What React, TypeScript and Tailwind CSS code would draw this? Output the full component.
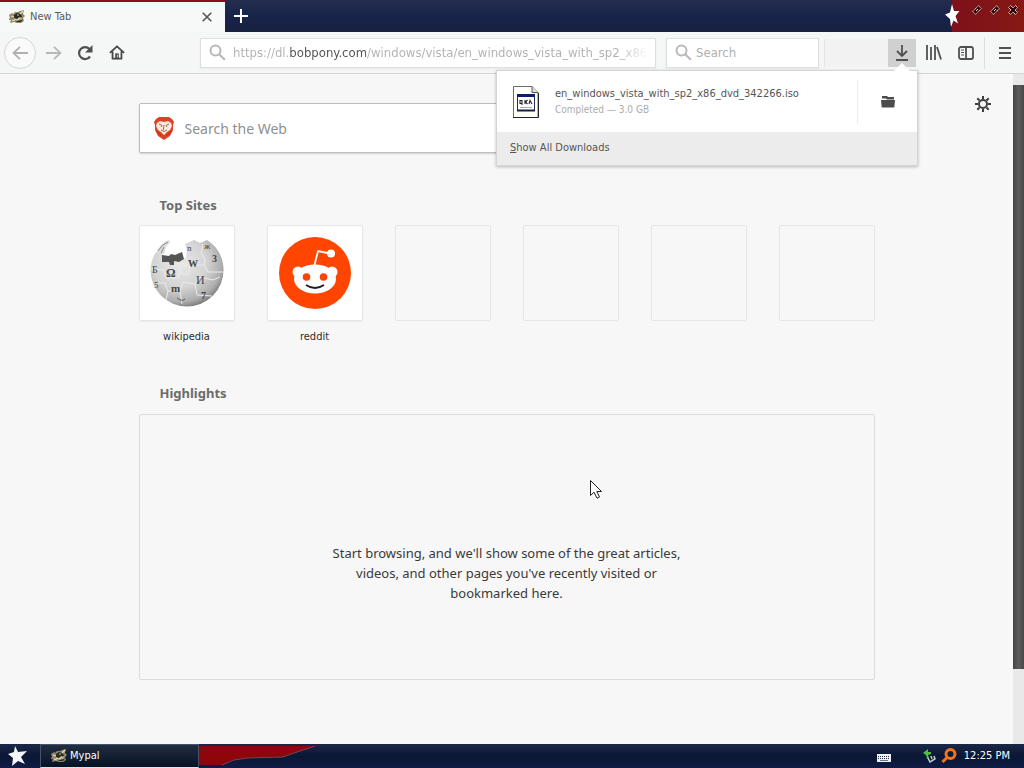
import type { ReactNode } from 'react';

const uiFont = "font-['DejaVu_Sans_Condensed','Noto_Sans',sans-serif]";
const pageFont = "font-['Noto_Sans',sans-serif]";

function MypalIcon() {
  return (
    <svg width="16" height="16" viewBox="0 0 16 16" aria-hidden="true">
      <path d="M0 6l3-2 1 1 2-2 3 0 2-1 4-1-1 4 2 2-2 2 1 3-3 2-4 0-3-1-4 1 1-3-3 0 2-2z" fill="#91886a" />
      <path d="M5 6l3-2 4 1 1 3-3 0-2 2-3-1zM6 11l4 1 4-2-2 3-4 0z" fill="#292a27" />
      <path d="M2 7l3 1M5 10l3 1 3-2M11 5l3-3M3 11l3 1" stroke="#e8dfae" strokeWidth="1.2" fill="none" />
      <path d="M8 6h2M12 9v2" stroke="#b9cfc0" strokeWidth="1" />
    </svg>
  );
}

function ToolButton({ label, className, children }: { label: string; className: string; children: ReactNode }) {
  return (
    <button type="button" aria-label={label} className={`flex shrink-0 items-center justify-center ${className}`}>
      {children}
    </button>
  );
}

function DiamondGlyph() {
  return (
    <svg width="10" height="10" viewBox="0 0 10 10" fill="#2c0808" aria-hidden="true">
      <path d="M.7 6.500L6.500.7l2.800 2.800L3.500 9.300z" stroke="#f6e4e0" strokeDasharray="1.300 .5" />
      <path d="M4 6l2-2" stroke="#f6e4e0" />
    </svg>
  );
}

function TitleBar() {
  return (
    <header className="flex h-8 bg-linear-to-b from-[#242d4d] via-[#17234a] to-[#18213f]">
      <div className="flex w-[225px] shrink-0 items-center border-t-2 border-[#8e0d1c] bg-[#f7f8f8] pr-2 pl-[9px]">
        <MypalIcon />
        <span className="ml-[5px] grow text-[11px] text-[#5a5a5a]">New Tab</span>
        <ToolButton label="Close tab" className="size-5">
          <svg width="10" height="10" viewBox="0 0 10 10" stroke="#555" strokeWidth="1.6">
            <path d="M.7.7l8.6 8.6M9.3.7L.7 9.3" />
          </svg>
        </ToolButton>
      </div>
      <ToolButton label="Open a new tab" className="w-8">
        <svg width="14" height="14" viewBox="0 0 14 14" stroke="#fff" strokeWidth="2">
          <path d="M7 0v14M0 7h14" />
        </svg>
      </ToolButton>
      <div className="grow" />
      <div className="flex w-20 shrink-0 bg-linear-to-r from-transparent from-10% via-[#7d101b] via-10% to-[#861913]">
        <svg width="16" height="30" viewBox="0 0 16 30" aria-hidden="true" className="shrink-0">
          <path d="M8 4l2 7 5.500 0-4 5 2.500 7.500-4.500-3L7 27l-1-8-5-4.500 5-2z" fill="#fff" />
        </svg>
        <div className="flex h-5 grow items-center justify-end gap-2 pr-[6px]">
          <ToolButton label="Minimize" className="size-[10px]"><DiamondGlyph /></ToolButton>
          <ToolButton label="Restore" className="size-[10px]"><DiamondGlyph /></ToolButton>
          <ToolButton label="Close window" className="size-[10px]">
            <svg width="10" height="10" viewBox="0 0 10 10" fill="#2c0808" stroke="#f8e8e5" strokeDasharray="1.300 .5" aria-hidden="true">
              <path d="M.5 2.500l2-2L5 3 7.500.5l2 2L7 5l2.500 2.500-2 2L5 7 2.500 9.500l-2-2L3 5z" />
            </svg>
          </ToolButton>
        </div>
      </div>
    </header>
  );
}

function FileIcon() {
  return (
    <svg width="28" height="32" viewBox="0 0 28 32" aria-hidden="true" className="shrink-0">
      <path d="M1.500 .5h18.500l6 6v25H1.500z" fill="#fffff8" stroke="#6d6e62" />
      <path d="M20 .5v6h6" fill="#ddd" stroke="#55564c" />
      <path d="M1 31.500h25.500V7" fill="none" stroke="#222" />
      <path d="M5.500 9.500h17v15h-17z" fill="#fff" stroke="#273052" />
      <path d="M5 8h18v3H5z" fill="#0d1b70" />
      <path d="M5 24.500h18" stroke="#171f3d" strokeWidth="2" />
      <path d="M8 14.500h2v3H8zM10 17v2M13 14v4M15.500 14l-2 2 2 2M17 18l1-3.500 2 3.500" fill="none" stroke="#20242f" strokeWidth="1.100" />
      <path d="M8 21.500h12" stroke="#a7aab3" />
    </svg>
  );
}

function DownloadsPanel() {
  return (
    <section aria-label="Downloads" className="absolute top-[38px] right-[106px] z-10 w-[422px] border border-[#d5d5d5] bg-white shadow-[0_1px_3px_rgba(0,0,0,0.25)]">
      <svg width="18" height="9" viewBox="0 0 18 9" className="absolute -top-[8px] right-[6px]" aria-hidden="true">
        <path d="M0 9l9-9 9 9z" fill="#fff" />
      </svg>
      <div className="flex h-[61px] items-center pl-[15px]">
        <FileIcon />
        <div className="ml-[15px] grow">
          <p className="text-[11px] leading-4 text-[#555555]">en_windows_vista_with_sp2_x86_dvd_342266.iso</p>
          <p className="text-[10px] leading-4 text-[#adadad]">Completed — 3.0 GB</p>
        </div>
        <div className="flex h-11 w-[60px] items-center justify-center border-l border-[#ededed]">
          <ToolButton label="Open containing folder" className="size-6">
            <svg width="14" height="13" viewBox="0 0 14 13" fill="#4c4c4c"><path d="M1 1h5l1 1h6v2.500H6L5 3.500H1zM0 5h14l-.7 7.500H.7z" /></svg>
          </ToolButton>
        </div>
      </div>
      <button type="button" className="flex h-[33px] w-full items-center bg-[#ececec] px-[13px] text-[11px] text-[#555555]">
        <span><u>S</u>how All Downloads</span>
      </button>
    </section>
  );
}

function Toolbar() {
  return (
    <div className="relative flex h-[42px] items-center border-b border-[#d4d4d4] bg-[#f5f6f6] pr-[7px] pl-1">
      <ToolButton label="Back" className="size-8 rounded-full border border-[#d6d6d6] bg-[#fafafa]">
        <svg width="16" height="14" viewBox="0 0 16 14" fill="none" stroke="#b0b0b0" strokeWidth="1.800"><path d="M16 7H1.500M8 .8L1.500 7 8 13.200" /></svg>
      </ToolButton>
      <ToolButton label="Forward" className="h-8 w-8 pl-1">
        <svg width="16" height="14" viewBox="0 0 16 14" fill="none" stroke="#b8b8b8" strokeWidth="1.800"><path d="M0 7h14.500M8 .8L14.500 7 8 13.200" /></svg>
      </ToolButton>
      <ToolButton label="Reload" className="h-8 w-8 pl-[2px]">
        <svg width="16" height="16" viewBox="0 0 16 16" fill="none" stroke="#505050" strokeWidth="2.200"><path d="M13 11.500A6 6 0 1 1 12.500 4" /><path d="M15.500 0v7.500H8z" fill="#505050" stroke="none" /></svg>
      </ToolButton>
      <ToolButton label="Home" className="h-8 w-8 pl-[2px]">
        <svg width="16" height="17" viewBox="0 0 18 17" fill="none" stroke="#474747" strokeWidth="2"><path d="M1 9l8-7.500L17 9M4 7.500V15.500h10V7.500" strokeLinejoin="round" /><path d="M7 9.500h4V16H7z" fill="#474747" stroke="none" /><path d="M9.500 11v3" stroke="#ddd" strokeWidth="1" /></svg>
      </ToolButton>
      <div className="ml-[68px] flex h-[30px] min-w-0 grow items-center border border-[#dedede] bg-white pl-2 shadow-xs">
        <Magnifier />
        <input
          aria-label="Address"
          defaultValue="https://dl.bobpony.com/windows/vista/en_windows_vista_with_sp2_x86_dvd_342266.iso"
          className="ml-[7px] h-7 min-w-0 grow bg-[linear-gradient(to_right,#b0b0b0_56px,#505050_56px,#505050_133px,#b0b0b0_133px,#b0b0b0_385px,#ffffff_415px)] bg-clip-text text-[13px] text-transparent outline-none"
        />
        <div className="w-2" />
      </div>
      <div className="ml-[10px] flex h-[30px] w-[153px] shrink-0 items-center border border-[#dedede] bg-white pl-2 shadow-xs">
        <Magnifier />
        <input aria-label="Search" placeholder="Search" className="ml-1 h-7 w-full min-w-0 text-[13px] outline-none placeholder:text-[#b0b0b0]" />
      </div>
      <div className="ml-[5px] h-7 w-16 shrink-0 border-l border-[#e4e4e4] bg-[#f2f2f2]" />
      <ToolButton label="Downloads" className="h-7 w-7 bg-[#d0d0d0]">
        <svg width="14" height="16" viewBox="0 0 14 16" fill="none" stroke="#505050" strokeWidth="1.800"><path d="M7 0v11M2 6l5 5 5-5M1 15h12" /></svg>
      </ToolButton>
      <ToolButton label="Library" className="h-8 w-8 pl-1">
        <svg width="16" height="15" viewBox="0 0 16 15" fill="none" stroke="#505050" strokeWidth="1.800"><path d="M1 0v15M5 2v13M9 0v15M11 2l4 12.500" /></svg>
      </ToolButton>
      <ToolButton label="Sidebars" className="h-8 w-8 pl-1">
        <svg width="16" height="14" viewBox="0 0 16 14" fill="none" stroke="#505050" strokeWidth="1.800"><rect x="1" y="1" width="14" height="12" rx="2" /><path d="M8 1v12" /><path d="M3 4h3M3 6.500h3M3 9h3" strokeWidth="1" /></svg>
      </ToolButton>
      <div className="ml-1 h-8 w-px shrink-0 bg-[#dedede]" />
      <ToolButton label="Open menu" className="h-8 w-8 pl-2">
        <svg width="12" height="12" viewBox="0 0 12 12" stroke="#505050" strokeWidth="1.800"><path d="M0 1h12M0 6h12M0 11h12" /></svg>
      </ToolButton>
      <DownloadsPanel />
    </div>
  );
}

function Magnifier() {
  return (
    <svg width="17" height="17" viewBox="0 0 17 17" fill="none" stroke="#b8b8b8" strokeWidth="2" aria-hidden="true" className="shrink-0">
      <circle cx="6.500" cy="6.500" r="5" />
      <path d="M10.200 10.200l5.600 5.600" />
    </svg>
  );
}

function BraveLogo() {
  return (
    <svg width="22" height="25" viewBox="0 0 22 25" aria-hidden="true" className="shrink-0">
      <path d="M6 1h10l3 2 2 3-1 3 0 5-3 6-6 4-6-4-3-6 0-5-1-3 2-3z" fill="#dc4326" />
      <path d="M4 7l3-2 4 1 4-1 3 2 1 3-2 4-3 2-3 3-3-3-3-2-2-4z" fill="#fbe9dc" />
      <path d="M6 8l3 1.500-1 1.500M16 8l-3 1.500 1 1.500M11 9l-.7 5M8 14l3 1.500 3-1.500" fill="none" stroke="#a8694f" />
      <path d="M3 15l3 2 2 3M19 15l-3 2-2 3" fill="none" stroke="#bd2f1c" />
    </svg>
  );
}

function WikipediaGlobe() {
  return (
    <svg width="74" height="70" viewBox="0 0 74 70" role="img" aria-label="Wikipedia globe" className="font-['Liberation_Serif',serif]">
      <defs>
        <radialGradient id="globe" cx=".4" cy=".35" r=".68">
          <stop offset="0" stopColor="#e9e9e9" />
          <stop offset=".55" stopColor="#d3d3d3" />
          <stop offset=".85" stopColor="#adadad" />
          <stop offset="1" stopColor="#777" />
        </radialGradient>
      </defs>
      <path d="M6 14L12 16 17 24 36 20 37 12 35 6 44 2 50 5 57 2Q73 12 73.500 32A36.500 36.500 0 0 1 .5 32Q1 22 6 14z" fill="url(#globe)" />
      <path d="M7 13Q11 5 19 2l1 2-4 5-2 7-5 1z" fill="#ddd" />
      <path d="M8 13Q12 6 18 4M14 9l-3 6" stroke="#888" fill="none" />
      <path d="M12 17l7 1 2-2 4 1 7-3 2 7-5 3-5-1 0 4-4 0-1-3-7 0z" fill="#555" />
      <path d="M36 20l1 8-7 2-1 8M1 31l13 1 2 8 11 0 3-5 8 2 2-10 14 0 4 7 15 0M4 45l11 0 3 8 12 0 3-9 12 2 4-7 14 3 7-3M18 53l-2 9M30 52l2 14M45 46l2 11 15 1M53 6l-2 9 4 6-1 6" fill="none" stroke="#ebebeb" />
      <g fill="#444">
        <text x="16" y="39" fontSize="12" fontWeight="700">Ω</text>
        <text x="38" y="29" fontSize="10" fontWeight="700">W</text>
        <text x="62" y="24" fontSize="10" fontWeight="700">3</text>
        <text x="46" y="46" fontSize="12">И</text>
        <text x="21" y="54" fontSize="11" fontWeight="700">m</text>
        <text x="51" y="61" fontSize="10" fontWeight="700">7</text>
        <text x="37" y="13" fontSize="9">n</text>
        <text x="54" y="11" fontSize="9">ж</text>
        <text x="2" y="35" fontSize="10">Б</text>
        <text x="4" y="50" fontSize="9">5</text>
      </g>
      <path d="M27 60q5 4 8 1" fill="none" stroke="#555" />
    </svg>
  );
}

function RedditLogo() {
  return (
    <svg width="72" height="72" viewBox="0 0 72 72" role="img" aria-label="Reddit">
      <circle cx="36" cy="36" r="36" fill="#ff4500" />
      <g fill="#fff">
        <circle cx="19" cy="35" r="5.500" />
        <circle cx="53" cy="35" r="5.500" />
        <ellipse cx="36" cy="42" rx="21" ry="14.500" />
        <circle cx="52" cy="16.500" r="4" />
      </g>
      <path d="M35.500 28l3.500-14 12 2.500" fill="none" stroke="#fff" strokeWidth="1.800" />
      <circle cx="27.500" cy="40" r="3.800" fill="#ff4500" />
      <circle cx="44.500" cy="40" r="3.800" fill="#ff4500" />
      <path d="M27 48q9 6 18 0" fill="none" stroke="#1d1d1d" strokeWidth="2" />
    </svg>
  );
}

function NewTabPage() {
  return (
    <main className={`relative grow px-8 pt-[29px] pb-16 ${pageFont}`}>
      <ToolButton label="Customize your new tab page" className="absolute top-5 right-5 size-5">
        <svg width="16" height="16" viewBox="0 0 16 16" fill="none" stroke="#3f3f3f">
          <circle cx="8" cy="8" r="4" strokeWidth="2" />
          <path d="M8 0v3M8 13v3M0 8h3M13 8h3M2.300 2.300l2.200 2.200M11.500 11.500l2.200 2.200M13.700 2.300l-2.200 2.200M4.500 11.500l-2.200 2.200" strokeWidth="2" />
        </svg>
      </ToolButton>
      <div className="mx-auto max-w-[736px]">
        <label className="flex h-[50px] items-center rounded-xs border border-[#bdbdbd] bg-white px-[13px] shadow-[0_1px_2px_rgba(0,0,0,0.15)]">
          <BraveLogo />
          <input aria-label="Search the Web" placeholder="Search the Web" className="ml-[10px] h-10 min-w-0 grow text-[14px] outline-none placeholder:text-[#8f8f8f]" />
        </label>
        <section>
          <h2 className="mt-10 pl-[21px] text-[13px] leading-6 font-bold text-[#6b6b6b]">Top Sites</h2>
          <ul className="mt-2 grid grid-cols-6 gap-8">
            <li>
              <a href="#wikipedia" className={`block text-center text-[11px] leading-4 text-[#2c2c2c] ${uiFont}`}>
                <span className="flex h-24 items-center justify-center rounded-xs border border-[#e6e6e6] bg-white shadow-xs"><WikipediaGlobe /></span>
                <span className="mt-2 block">wikipedia</span>
              </a>
            </li>
            <li>
              <a href="#reddit" className={`block text-center text-[11px] leading-4 text-[#2c2c2c] ${uiFont}`}>
                <span className="flex h-24 items-center justify-center rounded-xs border border-[#e6e6e6] bg-white shadow-xs"><RedditLogo /></span>
                <span className="mt-2 block">reddit</span>
              </a>
            </li>
            {[0, 1, 2, 3].map((slot) => (
              <li key={slot} className="h-24 rounded-xs border border-[#e6e6e6]" />
            ))}
          </ul>
        </section>
        <section>
          <h2 className="mt-9 pl-[21px] text-[13px] leading-6 font-bold text-[#6b6b6b]">Highlights</h2>
          <div className="mt-[9px] flex h-[266px] items-center justify-center rounded-xs border border-[#dcdcdc] pt-[52px]">
            <p className="w-[360px] text-center text-[13px] leading-5 text-[#3a3a3a]">
              Start browsing, and we'll show some of the great articles, videos, and other pages you've recently visited or bookmarked here.
            </p>
          </div>
        </section>
      </div>
    </main>
  );
}

function Taskbar() {
  return (
    <footer className="flex h-6 items-center bg-linear-to-b from-[#1b2747] via-[#0a1734] to-[#111c46] text-[11px] text-white">
      <ToolButton label="Start" className="h-6 w-10 pr-1">
        <svg width="20" height="20" viewBox="0 0 20 20" aria-hidden="true">
          <path d="M7 0l3 6 9-1-6 6 4 7-7-3-6 5 1-8-5-4 6-2z" fill="#f4f6fc" />
        </svg>
      </ToolButton>
      <button type="button" className="flex h-6 w-[159px] shrink-0 items-center border border-[#46516b] border-b-[#dce0ea] bg-linear-to-b from-[#222d3f] to-[#071225] pl-[10px]">
        <MypalIcon />
        <span className="ml-[3px]">Mypal</span>
      </button>
      <svg width="118" height="24" viewBox="0 0 118 24" aria-hidden="true" className="shrink-0">
        <path d="M0 2h116L98 8 84 13l-35 1-14 2-12 5H0z" fill="#8e050b" />
        <path d="M116 2L98 8 84 13l-35 1-14 2-12 5" fill="none" stroke="#6a4a50" />
      </svg>
      <div className="grow" />
      <svg width="14" height="8" viewBox="0 0 14 8" aria-hidden="true" className="mt-1 mr-8 shrink-0">
        <path d="M0 0h14v8H0z" fill="#f0f2f5" />
        <path d="M1 2.500h12M1 4.500h12" stroke="#1a2540" strokeDasharray="1 1" />
        <path d="M3 6.500h8" stroke="#1a2540" strokeWidth=".6" />
      </svg>
      <svg width="13" height="14" viewBox="0 0 13 14" aria-hidden="true" className="mr-[5px] shrink-0">
        <path d="M0 4l5-4 0 3 3 0 0 2-3 1 1 3-2 1-1-4z" fill="#50bd49" />
        <path d="M5 9l2 4 5-3-1-3M8 7l1 3" fill="none" stroke="#c3cdd0" strokeWidth="1.500" />
      </svg>
      <svg width="16" height="16" viewBox="0 0 16 16" fill="none" stroke="#f47518" aria-hidden="true" className="mr-[7px] shrink-0">
        <circle cx="9.500" cy="6" r="4.500" strokeWidth="3" />
        <path d="M6 9.500L1.500 14" strokeWidth="3" />
      </svg>
      <time className="mr-[14px]">12:25 PM</time>
    </footer>
  );
}

export default function App() {
  return (
    <div className={`flex min-h-screen flex-col bg-[#f7f7f7] ${uiFont}`}>
      <TitleBar />
      <Toolbar />
      <div className="flex grow">
        <NewTabPage />
        <div className="w-[11px] shrink-0 bg-[#e9e9e9] pt-[11px]" aria-hidden="true">
          <div className="h-[88%] min-h-[584px] bg-linear-to-r from-[#454545] via-[#5c5c5c] to-[#484848]" />
        </div>
      </div>
      <Taskbar />
      <svg width="14" height="22" viewBox="0 0 14 22" className="pointer-events-none absolute top-[479px] left-[589px]" aria-hidden="true">
        <path d="M1.500 1.500v15l3.500-3.300 3 6 2.500-1.200-2.700-5.500h4.700z" fill="#fff" stroke="#222" />
      </svg>
    </div>
  );
}
